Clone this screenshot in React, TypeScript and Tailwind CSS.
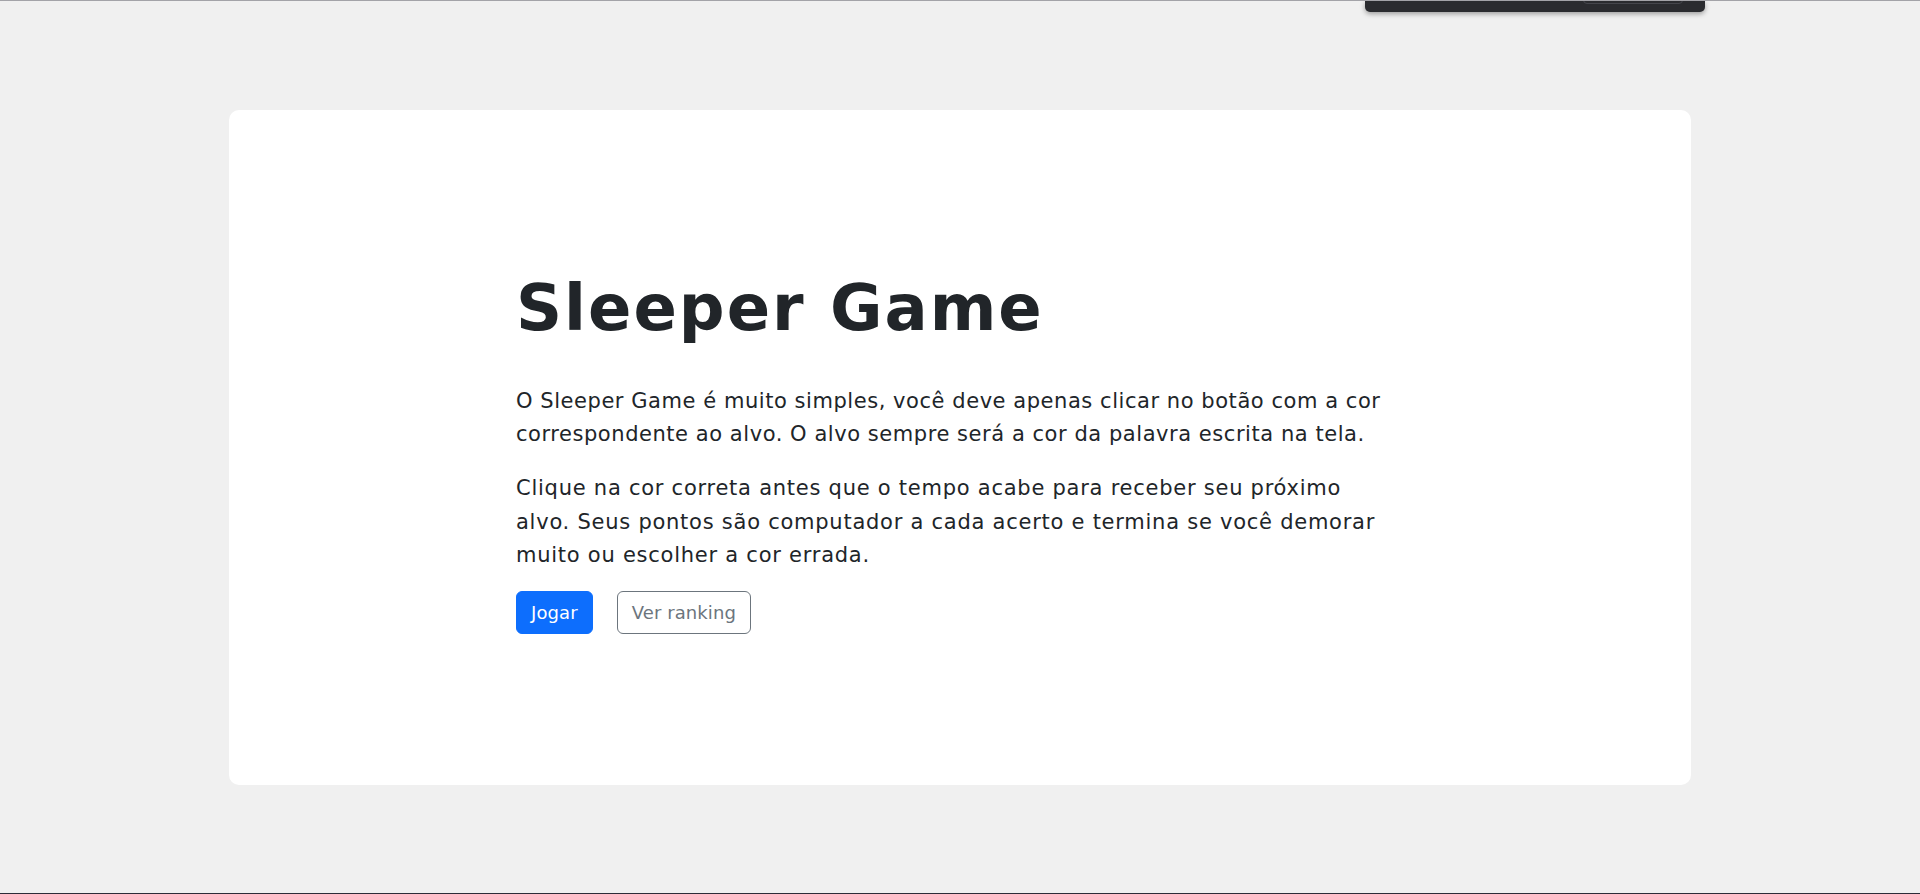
import React from 'react'

const font = { fontFamily: '"DejaVu Sans", Verdana, sans-serif' }

function TopPopup() {
  return (
    <div className="absolute left-[1365px] top-0 h-[11px] w-[340px] rounded-b-[5px] bg-[#2a2b2f] shadow-[0_2px_5px_rgba(0,0,0,0.35)]">
      <div className="absolute left-[218px] top-[-6px] h-[9px] w-[100px] rounded-[4px] border border-[#45464c]" />
    </div>
  )
}

export default function App() {
  return (
    <div
      className="relative h-[894px] w-full overflow-hidden border-t border-b border-t-[#a3a3a8] border-b-[#2c2c38] bg-[#f0f0f0]"
      style={font}
    >
      <TopPopup />

      {/* Main card */}
      <div className="mx-auto mt-[109px] h-[675px] w-[1462px] rounded-[10px] bg-white pl-[287px] pt-[160px]">
        <div className="w-[878px] text-[#212529]">
          <h1 className="mb-[38px] text-[64px] font-bold leading-[1.2] tracking-[2px]">Sleeper Game</h1>
          <p className="mb-[20px] text-[21px] leading-[1.6] tracking-[0.55px]">
            O Sleeper Game é muito simples, você deve apenas clicar no botão com a cor correspondente ao alvo. O alvo
            sempre será a cor da palavra escrita na tela.
          </p>
          <p className="mb-[18px] text-[21px] leading-[1.6] tracking-[0.75px]">
            Clique na cor correta antes que o tempo acabe para receber seu próximo alvo. Seus pontos são computador a
            cada acerto e termina se você demorar muito ou escolher a cor errada.
          </p>
          <div className="flex gap-6">
            <button className="h-[43px] rounded-[6px] border border-[#0d6efd] bg-[#0d6efd] px-[14px] text-[18px] tracking-[0.1px] text-white">
              Jogar
            </button>
            <button className="h-[43px] rounded-[6px] border border-[#6c757d] bg-white px-[14px] text-[18px] tracking-[0.1px] text-[#6c757d]">
              Ver ranking
            </button>
          </div>
        </div>
      </div>
    </div>
  )
}
